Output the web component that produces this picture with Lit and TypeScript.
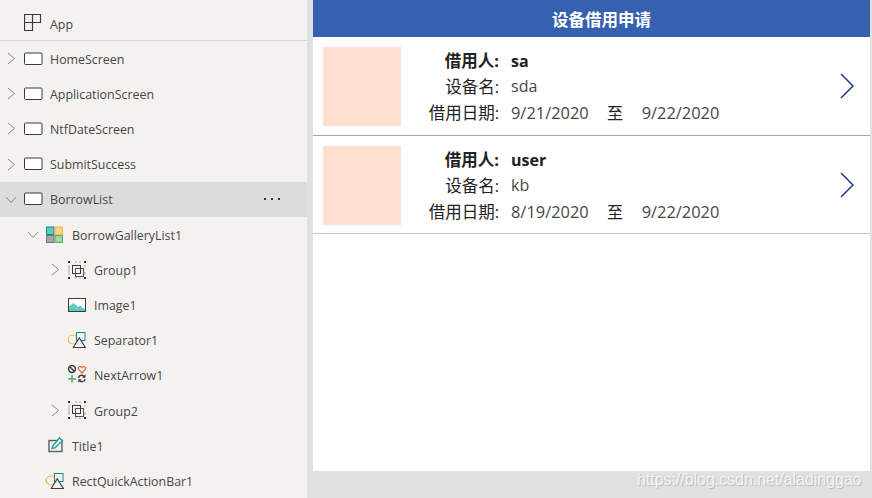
import { LitElement, html, css, svg } from "lit";
import { customElement } from "lit/decorators.js";

const dark = "#3b3a39";
const shapes = svg`
    <circle cx="5.700" cy="9.500" r="4.500" fill="none" stroke="#f4b94e" stroke-width="1.200"/>
    <rect x="9.500" y="2.500" width="8.500" height="8" fill="none" stroke="#0e8f8a"/>
    <path d="M12.300 7.800l6 9.700H6.300z" fill="#f3f2f1" stroke="${dark}" stroke-width="1.100"/>`;
const icons: Record<string, unknown> = {
  screen: svg`<rect x="1.500" y="4" width="17.500" height="11.500" rx="1" fill="#fff" stroke="${dark}" stroke-width="1"/>`,
  gallery: svg`
    <rect x="1.500" y="2" width="7.500" height="7.500" fill="#5fc9c4" stroke="#0e8f8a"/>
    <rect x="10" y="2" width="7.500" height="7.500" fill="#fdd38a" stroke="#f2b84f"/>
    <rect x="1.500" y="10.500" width="7.500" height="7" fill="#a6a6a6" stroke="#777"/>
    <rect x="10" y="10.500" width="7.500" height="7" fill="#9fd6a2" stroke="#62ad68"/>`,
  group: svg`
    <g fill="none" stroke="${dark}">
      <rect x="5.500" y="5.500" width="8" height="8"/>
      <rect x="8.500" y="8.500" width="8" height="8" stroke-opacity=".85"/>
      <path d="M2 5v10M18 5v2M18 12v3M8 2h2M12 2h2M8 18h2M12 18h2" stroke-opacity=".4"/>
    </g>
    <g fill="#333"><rect x="1" y="1" width="2" height="2"/><rect x="17" y="1" width="2" height="2"/><rect x="1" y="17" width="2" height="2"/><rect x="17" y="17" width="2" height="2"/></g>`,
  image: svg`
    <rect x="1.500" y="3.500" width="17" height="13" fill="#fff" stroke="${dark}"/>
    <path d="M2 16v-4.500L6.500 8l4.500 4 2-1.500 5 4V16z" fill="#5fc9c4"/>
    <rect x="14" y="5.500" width="1.500" height="1.500" fill="#fdd38a"/>`,
  shapes,
  icons: svg`
    <circle cx="5" cy="4" r="3.400" fill="none" stroke="${dark}" stroke-width="1.500"/>
    <path d="M2.700 1.700l4.600 4.600" stroke="${dark}" stroke-width="1.400"/>
    <path d="M15 8l-3.300-3.600c-1.500-2 1.400-4 3.300-2 1.900-2 4.800 0 3.300 2z" fill="none" stroke="#f0623e" stroke-width="1.200"/>
    <path d="M5 10v7.500M1.200 13.800h7.600" stroke="#63b368" stroke-width="1.700"/>
    <path d="M11.500 12.800c.5-3 4.400-3.500 5.800-1M18.200 14.100c-.5 3-4.400 3.500-5.800 1" fill="none" stroke="${dark}" stroke-width="1.400"/>
    <path d="M18.400 9.300v3.400H15zM11.300 17.700v-3.400h3.400z" fill="${dark}"/>`,
  label: svg`
    <rect x="4" y="4.500" width="13" height="11" fill="none" stroke="#605e5c" stroke-width="1.400"/>
    <path d="M7 12.500l1-3L14.500 2l3 2.500-7.500 7.500z" fill="#f3f2f1" stroke="#0e9f9a" stroke-width="1.300"/>`,
};

interface Row { name: string; level: number; chevron?: "r" | "d"; icon: string; selected?: boolean }
const rows: Row[] = [
  { name: "HomeScreen", level: 0, chevron: "r", icon: "screen" },
  { name: "ApplicationScreen", level: 0, chevron: "r", icon: "screen" },
  { name: "NtfDateScreen", level: 0, chevron: "r", icon: "screen" },
  { name: "SubmitSuccess", level: 0, chevron: "r", icon: "screen" },
  { name: "BorrowList", level: 0, chevron: "d", icon: "screen", selected: true },
  { name: "BorrowGalleryList1", level: 1, chevron: "d", icon: "gallery" },
  { name: "Group1", level: 2, chevron: "r", icon: "group" },
  { name: "Image1", level: 2, icon: "image" },
  { name: "Separator1", level: 2, icon: "shapes" },
  { name: "NextArrow1", level: 2, icon: "icons" },
  { name: "Group2", level: 2, chevron: "r", icon: "group" },
  { name: "Title1", level: 1, icon: "label" },
  { name: "RectQuickActionBar1", level: 1, icon: "shapes" },
];

const cards = [
  { user: "sa", device: "sda", from: "9/21/2020", to: "9/22/2020", line: "line-a" },
  { user: "user", device: "kb", from: "8/19/2020", to: "9/22/2020", line: "line-b" },
];

@customElement("app-root")
export class AppRoot extends LitElement {
  static styles = css`
    :host { display: block; position: relative; width: 872px; height: 498px; overflow: hidden; background: #e1e1e1; font-family: "Open Sans", "Noto Sans CJK SC", sans-serif; }
    .page { display: flex; height: 498px; }
    .tree { width: 307px; height: 498px; flex: none; background: #f3f2f1; color: #484644; font-size: 12.4px; overflow: hidden; }
    .app { display: flex; align-items: center; height: 40px; border-bottom: 1px solid #d6d5d4; padding-left: 24px; gap: 8px; }
    .app svg { width: 18px; height: 18px; margin-top: 6px; }
    .app span { margin-top: 8px; }
    .row { display: flex; align-items: center; height: 35.2px; position: relative; }
    .row.selected { background: #dcdcdc; }
    .row span.name { margin-top: 1.3px; }
    .l0 { padding-left: 6px; } .l1 { padding-left: 28px; } .l2 { padding-left: 50px; }
    .chev { width: 13px; height: 13px; margin-right: 4px; flex: none; fill: none; stroke: #8a8886; stroke-width: 1; overflow: visible; }
    .nochev { width: 17px; flex: none; }
    .ic { width: 20px; height: 20px; flex: none; margin-right: 7px; }
    .more { position: absolute; left: 264px; top: 16px; display: flex; gap: 5px; }
    .more i { width: 2px; height: 2px; background: #333; display: block; }
    .main { margin-left: 6px; width: 557px; height: 471px; background: #fff; }
    .head { height: 37px; background: #3660b0; color: #fff; font-weight: 700; font-size: 16.5px; display: flex; align-items: center; justify-content: center; padding-left: 20px; }
    .card { height: 98px; display: flex; position: relative; }
    .line-a { border-bottom: 1px solid #9ea5be; }
    .line-b { border-bottom: 1px solid #c4c8d8; height: 97px; }
    .thumb { width: 78px; height: 79px; margin: 10px 0 0 10px; background: #fedfd0; flex: none; }
    .info { display: grid; grid-template-columns: 98px auto; column-gap: 12px; grid-auto-rows: 26px; margin: 11px 0 0 0; align-items: center; font-size: 16px; color: #484644; line-height: 26px; }
    .lab { text-align: right; color: #222; font-size: 16.5px; white-space: nowrap; }
    .b { font-weight: 700; color: #222; }
    .val { margin-top: -2px; }
    .dates { display: flex; white-space: nowrap; font-size: 16.4px; }
    .dates .to { width: 53px; text-align: center; color: #222; font-size: 16px; }
    .arrow { position: absolute; left: 526px; top: 36px; width: 16px; height: 26px; fill: none; stroke: #0f2a80; stroke-width: 1.4; }
    .mark { position: absolute; left: 637px; top: 471px; font-family: "Liberation Sans", Arial, sans-serif; font-size: 15.9px; color: #f4f4f4; text-shadow: 1px 1px 1px rgba(150,150,150,.55); white-space: nowrap; }
  `;

  private row(r: Row) {
    return html`<div class="row l${r.level} ${r.selected ? "selected" : ""}">
      ${r.chevron === "r"
        ? html`<svg class="chev" viewBox="0 0 13 13"><path d="M2 1l6.500 5.500L2 12"/></svg>`
        : r.chevron === "d"
        ? html`<svg class="chev" viewBox="0 0 13 13"><path d="M0 4l5 5.500L10 4"/></svg>`
        : html`<span class="nochev"></span>`}
      <svg class="ic" viewBox="0 0 20 20">${icons[r.icon]}</svg>
      <span class="name">${r.name}</span>
      ${r.selected ? html`<div class="more"><i></i><i></i><i></i></div>` : ""}
    </div>`;
  }

  render() {
    return html`<div class="page">
        <div class="tree">
          <div class="app">
            <svg viewBox="0 0 18 18" fill="none" stroke="${dark}" stroke-width="1.200"><path d="M.5.5h16v8h-8v8h-8zM8.500.5v8M.5 8.500h8"/></svg>
            <span>App</span>
          </div>
          ${rows.map((r) => this.row(r))}
        </div>
        <div class="main">
          <div class="head">设备借用申请</div>
          ${cards.map((c) => html`<div class="card ${c.line}">
            <div class="thumb"></div>
            <div class="info">
              <span class="lab b">借用人:</span><span class="b">${c.user}</span>
              <span class="lab">设备名:</span><span class="val">${c.device}</span>
              <span class="lab">借用日期:</span>
              <span class="dates"><span>${c.from}</span><span class="to">至</span><span>${c.to}</span></span>
            </div>
            <svg class="arrow" viewBox="0 0 16 26"><path d="M2 1l12 12L2 25"/></svg>
          </div>`)}
        </div>
      </div>
      <div class="mark">https://blog.csdn.net/aladinggao</div>`;
  }
}
